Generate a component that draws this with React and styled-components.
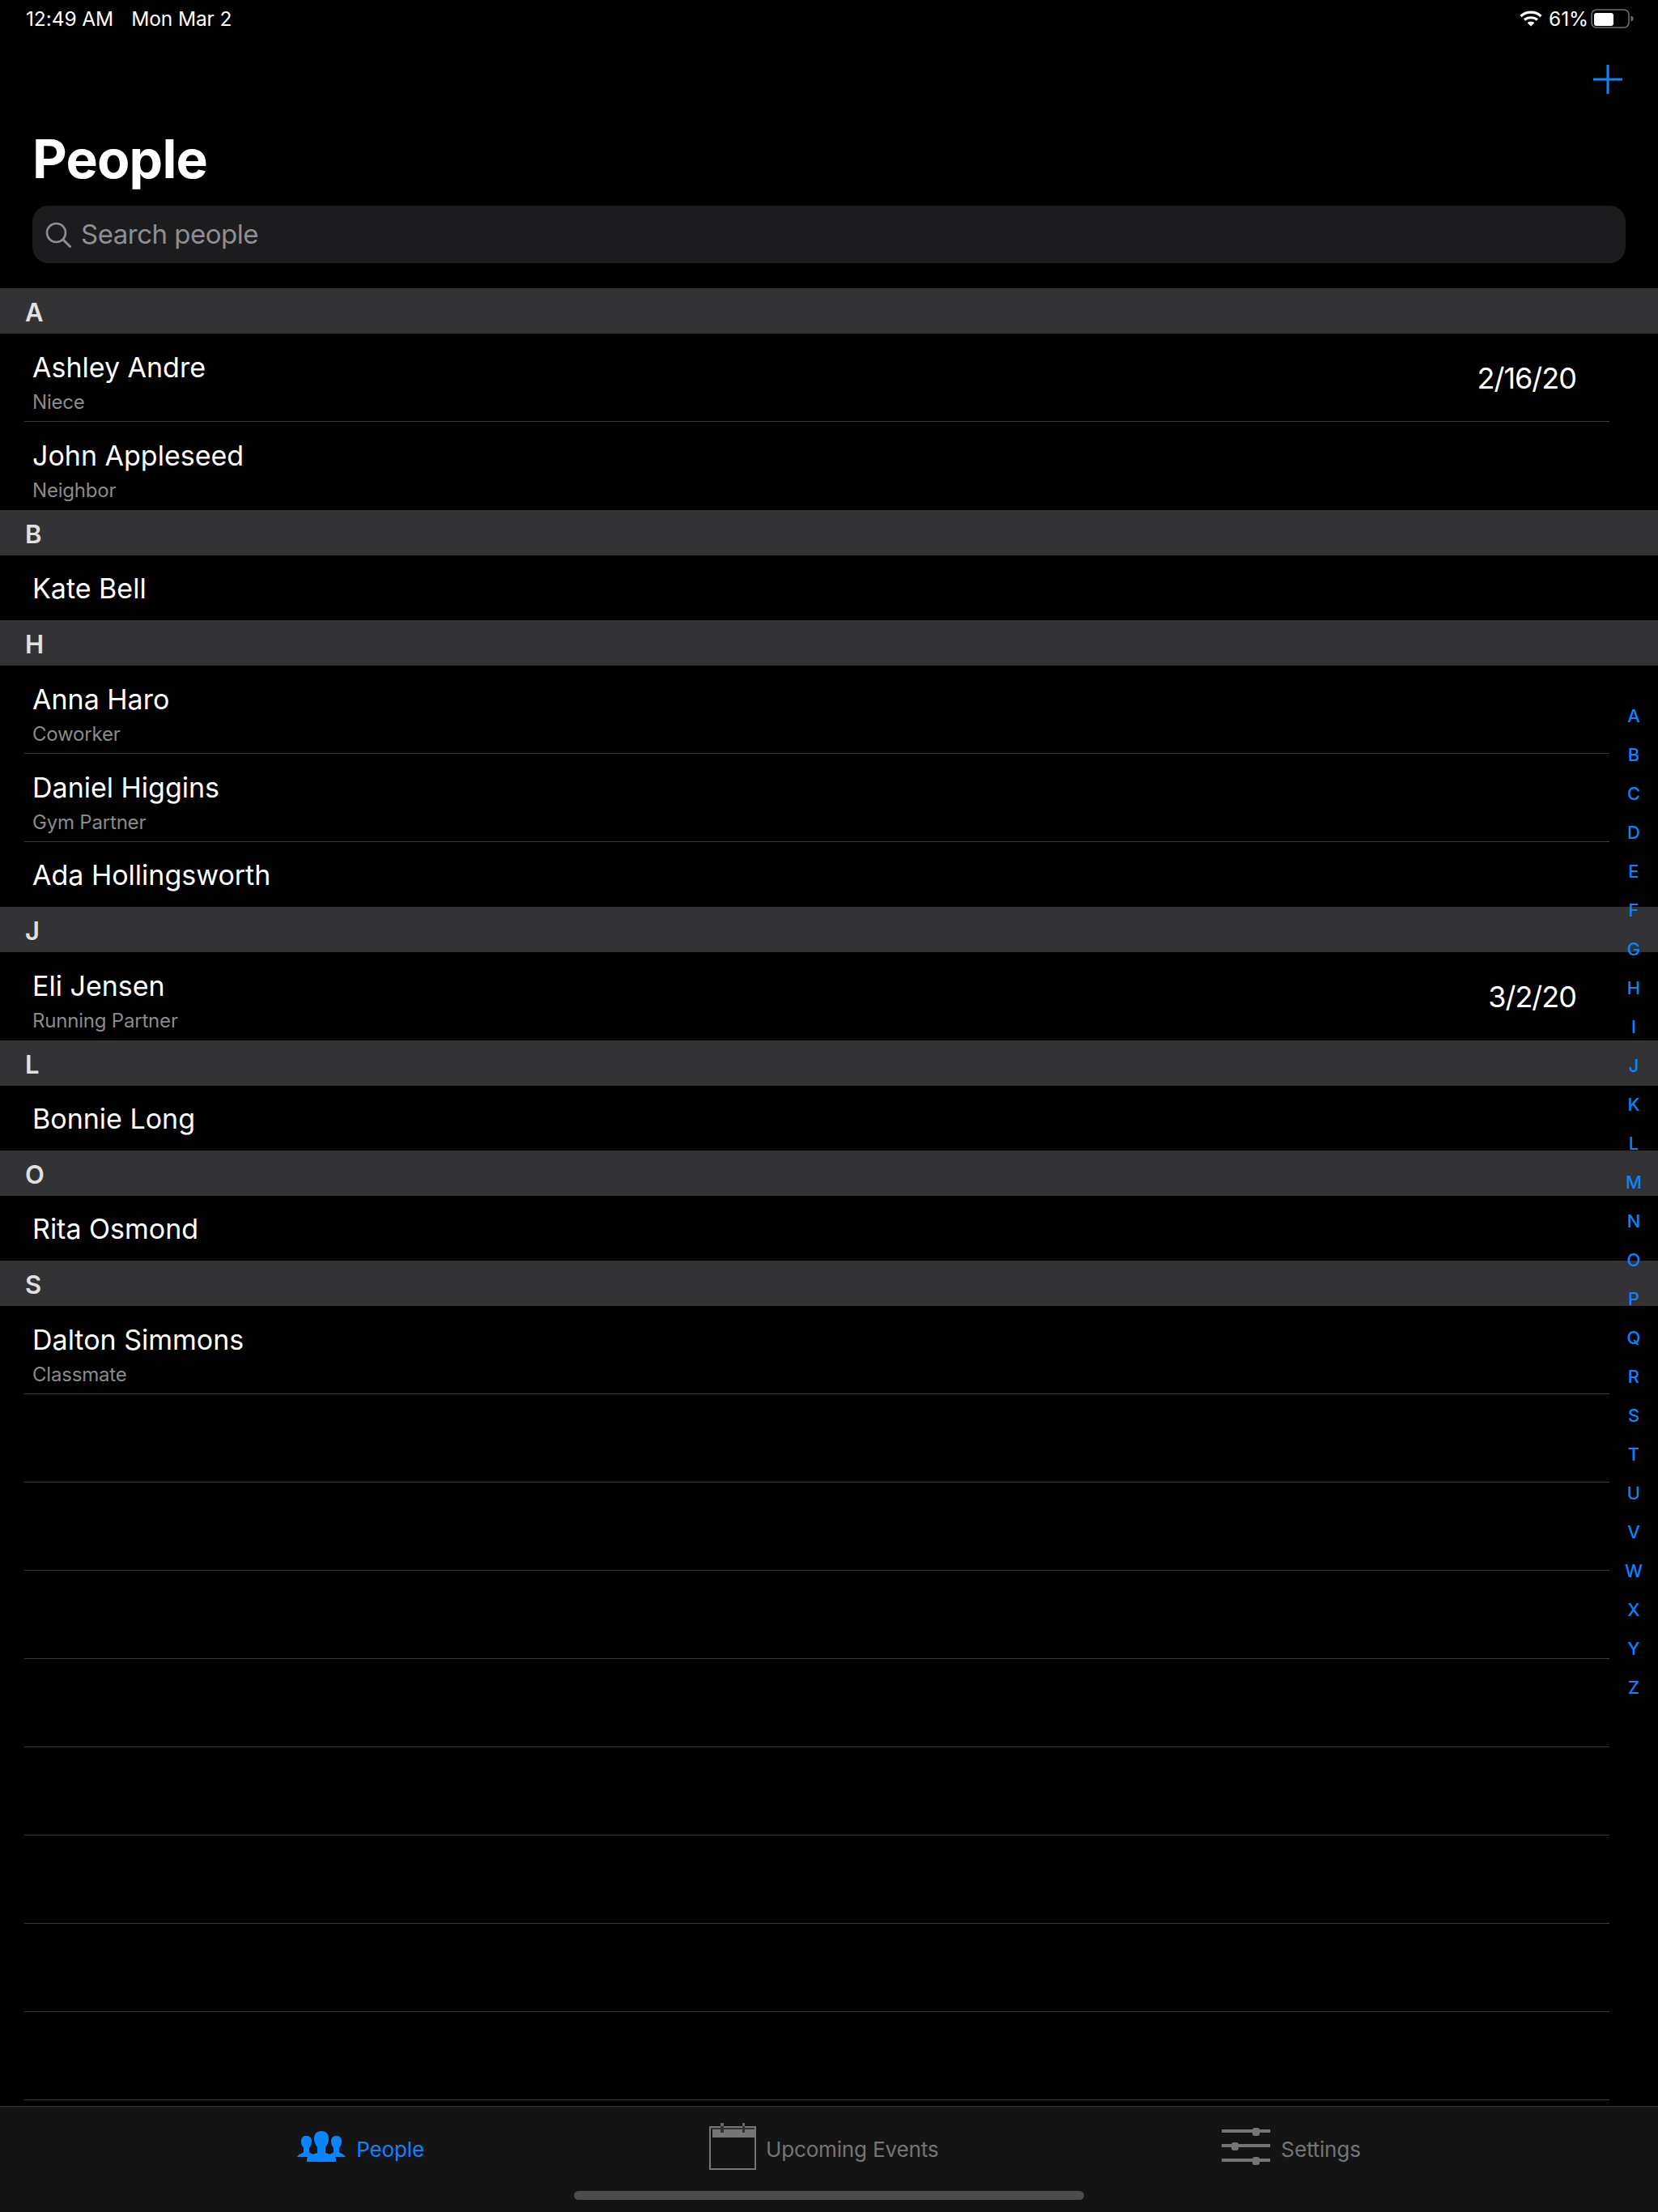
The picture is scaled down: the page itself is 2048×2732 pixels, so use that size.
import React from "react";
import styled, { createGlobalStyle } from "styled-components";

const GlobalStyle = createGlobalStyle`
  html, body {
    margin: 0;
    padding: 0;
    background: #000;
  }
  * {
    box-sizing: border-box;
  }
`;

const sections = [
  {
    letter: "A",
    people: [
      { name: "Ashley Andre", relation: "Niece", date: "2/16/20", line: true },
      { name: "John Appleseed", relation: "Neighbor" },
    ],
  },
  { letter: "B", people: [{ name: "Kate Bell" }] },
  {
    letter: "H",
    people: [
      { name: "Anna Haro", relation: "Coworker", line: true },
      { name: "Daniel Higgins", relation: "Gym Partner", line: true },
      { name: "Ada Hollingsworth" },
    ],
  },
  { letter: "J", people: [{ name: "Eli Jensen", relation: "Running Partner", date: "3/2/20" }] },
  { letter: "L", people: [{ name: "Bonnie Long" }] },
  { letter: "O", people: [{ name: "Rita Osmond" }] },
  { letter: "S", people: [{ name: "Dalton Simmons", relation: "Classmate", line: true }] },
];

const alphabet = "ABCDEFGHIJKLMNOPQRSTUVWXYZ".split("");
const emptyRows = [0, 1, 2, 3, 4, 5, 6, 7];

function WifiIcon() {
  return (
    <svg width="28" height="20" viewBox="0 0 28 20" fill="none">
      <path d="M1.500 7C8.500 .6 19.500 .6 26.500 7" stroke="#fff" strokeWidth="3.200" />
      <path d="M6 11.500C10.500 7.800 17.500 7.800 22 11.500" stroke="#fff" strokeWidth="3.200" />
      <path d="M14 19.500L9.700 15.200C12 13.300 16 13.300 18.300 15.200Z" fill="#fff" />
    </svg>
  );
}

function BatteryIcon() {
  return (
    <svg width="53" height="24" viewBox="0 0 53 24" fill="none">
      <rect x="1" y="1" width="46" height="22" rx="6" stroke="#6e6e6e" strokeWidth="1.600" />
      <rect x="4" y="5" width="24" height="16" rx="3" fill="#fff" />
      <path d="M49.500 8.500C51.500 9 52.500 10.400 52.500 12C52.500 13.600 51.500 15 49.500 15.500Z" fill="#6e6e6e" />
    </svg>
  );
}

function PlusIcon() {
  return (
    <svg width="36" height="36" viewBox="0 0 36 36" fill="none">
      <path d="M18 1V35M1 18H35" stroke="#0a84ff" strokeWidth="3" strokeLinecap="round" />
    </svg>
  );
}

function SearchIcon() {
  return (
    <svg width="32" height="32" viewBox="0 0 32 32" fill="none">
      <circle cx="13.500" cy="13.500" r="11.500" stroke="#8e8e93" strokeWidth="2.600" />
      <path d="M22 22L30.500 30.500" stroke="#8e8e93" strokeWidth="3" strokeLinecap="round" />
    </svg>
  );
}

function PeopleIcon() {
  return (
    <svg width="60" height="38" viewBox="0 0 60 38" fill="#0a84ff">
      <path d="M11.500 6C16 6 18 8.500 18 12.500C18 16 17 18.500 15 21V26C17 28 20 28 21 32H0C2 28 6 28 8 26V21C6 18.500 5 16 5 12.500C5 8.500 7 6 11.500 6Z" />
      <path d="M48.500 6C53 6 55 8.500 55 12.500C55 16 54 18.500 52 21V26C54 28 58 28 60 32H39C40 28 43 28 45 26V21C43 18.500 42 16 42 12.500C42 8.500 44 6 48.500 6Z" />
      <path d="M30 0C36 0 39 3.500 39 9C39 13.500 37.500 17 35 20V27C39 28.500 46 29 48 34V38H12V34C14 29 21 28.500 25 27V20C22.500 17 21 13.500 21 9C21 3.500 24 0 30 0Z" />
    </svg>
  );
}

function CalendarIcon() {
  return (
    <svg width="58" height="58" viewBox="0 0 58 58" fill="none">
      <rect x="1" y="5" width="56" height="52" stroke="#757575" strokeWidth="2" />
      <rect x="2" y="6" width="54" height="2" fill="#333" />
      <rect x="4" y="8" width="52" height="10" fill="#757575" />
      <rect x="14" y="0" width="4" height="4" fill="#666" />
      <rect x="14" y="4" width="4" height="8" fill="#333" />
      <rect x="41" y="0" width="3" height="4" fill="#666" />
      <rect x="41" y="4" width="3" height="8" fill="#333" />
    </svg>
  );
}

function SlidersIcon() {
  return (
    <svg width="60" height="46" viewBox="0 0 60 46" fill="#757575">
      <rect y="2" width="60" height="4" />
      <rect x="38" y="0" width="9" height="10" rx="3" />
      <rect y="20" width="60" height="4" />
      <rect x="12" y="18" width="9" height="10" rx="3" />
      <rect y="38" width="60" height="4" />
      <rect x="38" y="36" width="9" height="10" rx="3" />
    </svg>
  );
}

function App() {
  return (
    <Page>
      <GlobalStyle />
      <StatusBar>
        <StatusGroup>
          <span>12:49 AM</span>
          <span>Mon Mar 2</span>
        </StatusGroup>
        <StatusRight>
          <WifiIcon />
          <BatteryText>61%</BatteryText>
          <BatteryIcon />
        </StatusRight>
      </StatusBar>

      <NavRow>
        <PlusIcon />
      </NavRow>
      <Title>People</Title>
      <SearchBox>
        <SearchIcon />
        <SearchText>Search people</SearchText>
      </SearchBox>

      <List>
        {sections.map((section) => (
          <section key={section.letter}>
            <SectionHeader>{section.letter}</SectionHeader>
            {section.people.map((person) => (
              <Row key={person.name} $tall={!!person.relation} $line={person.line}>
                <PersonText $withRelation={!!person.relation}>
                  <Name>{person.name}</Name>
                  {person.relation && <Relation>{person.relation}</Relation>}
                </PersonText>
                {person.date && <DateText>{person.date}</DateText>}
              </Row>
            ))}
          </section>
        ))}
        {emptyRows.map((i) => (
          <Row key={i} $tall $line />
        ))}
      </List>

      <IndexBar>
        {alphabet.map((letter) => (
          <IndexLetter key={letter}>{letter}</IndexLetter>
        ))}
      </IndexBar>

      <TabBar>
        <TabItem $active>
          <PeopleIcon />
          <TabLabel>People</TabLabel>
        </TabItem>
        <TabItem $inset>
          <CalendarIcon />
          <TabLabel>Upcoming Events</TabLabel>
        </TabItem>
        <TabItem>
          <SlidersIcon />
          <TabLabel>Settings</TabLabel>
        </TabItem>
        <HomeIndicator />
      </TabBar>
    </Page>
  );
}

const Page = styled.div`
  position: relative;
  width: 2048px;
  height: 2732px;
  overflow: hidden;
  background: #000;
  color: #fff;
  font-family: Inter, "Liberation Sans", sans-serif;
`;

const StatusBar = styled.div`
  height: 46px;
  padding: 0 30px 0 32px;
  display: flex;
  align-items: center;
  justify-content: space-between;
  font-size: 24.500px;
  letter-spacing: -0.100px;
`;

const StatusGroup = styled.div`
  display: flex;
  gap: 22px;
`;

const StatusRight = styled.div`
  display: flex;
  align-items: center;
  gap: 3px;
`;

const BatteryText = styled.span`
  margin-left: 5px;
`;

const NavRow = styled.div`
  height: 34px;
  margin-top: 34px;
  padding-right: 44px;
  display: flex;
  justify-content: flex-end;
`;

const Title = styled.h1`
  margin: 42px 0 0;
  padding-left: 40px;
  height: 80px;
  line-height: 80px;
  font-size: 66px;
  font-weight: 700;
  letter-spacing: -0.800px;
`;

const SearchBox = styled.div`
  margin: 18px 40px 0;
  height: 71px;
  padding-left: 16px;
  display: flex;
  align-items: center;
  gap: 12px;
  border-radius: 20px;
  background: #1c1c1e;
`;

const SearchText = styled.span`
  margin-bottom: 2px;
  font-size: 33px;
  letter-spacing: -0.500px;
  color: #8e8e93;
`;

const List = styled.div`
  margin-top: 31px;
`;

const SectionHeader = styled.div`
  height: 56px;
  padding: 2px 0 0 31px;
  display: flex;
  align-items: center;
  background: #333335;
  font-size: 31px;
  font-weight: 600;
  color: #e0e0e0;
`;

const Row = styled.div`
  position: relative;
  height: ${(props) => (props.$tall ? "109px" : "80px")};
  padding: 0 101px 0 40px;
  display: flex;
  align-items: center;
  justify-content: space-between;
  ${(props) =>
    props.$line &&
    `&::after {
      content: "";
      position: absolute;
      left: 30px;
      right: 60px;
      bottom: 0;
      height: 1px;
      background: #38383a;
    }`}
`;

const PersonText = styled.div`
  padding-top: ${(props) => (props.$withRelation ? "10px" : "2px")};
`;

const Name = styled.div`
  font-size: 34px;
  line-height: 44px;
`;

const Relation = styled.div`
  margin-top: 6px;
  font-size: 24px;
  line-height: 30px;
  letter-spacing: -0.200px;
  color: #8a8a8e;
`;

const DateText = styled.div`
  font-size: 36px;
  letter-spacing: -1px;
`;

const IndexBar = styled.div`
  position: absolute;
  top: 860px;
  right: 0;
  width: 60px;
  display: flex;
  flex-direction: column;
  align-items: center;
`;

const IndexLetter = styled.div`
  height: 48px;
  line-height: 48px;
  font-size: 22px;
  font-weight: 500;
  color: #0a84ff;
`;

const TabBar = styled.div`
  position: absolute;
  left: 0;
  right: 0;
  bottom: 0;
  height: 131px;
  padding-bottom: 32px;
  display: flex;
  align-items: center;
  justify-content: center;
  gap: 350px;
  background: #141414;
  border-top: 1px solid #38383a;
`;

const TabItem = styled.div`
  display: flex;
  align-items: center;
  gap: ${(props) => (props.$inset ? "12px" : "13px")};
  padding-left: ${(props) => (props.$inset ? "2px" : "0")};
  color: ${(props) => (props.$active ? "#0a84ff" : "#757575")};
`;

const TabLabel = styled.span`
  margin-top: 6px;
  font-size: 26px;
  letter-spacing: -0.150px;
`;

const HomeIndicator = styled.div`
  position: absolute;
  left: 709px;
  bottom: 15px;
  width: 630px;
  height: 11px;
  border-radius: 6px;
  background: #4d4d4d;
`;

export default App;
